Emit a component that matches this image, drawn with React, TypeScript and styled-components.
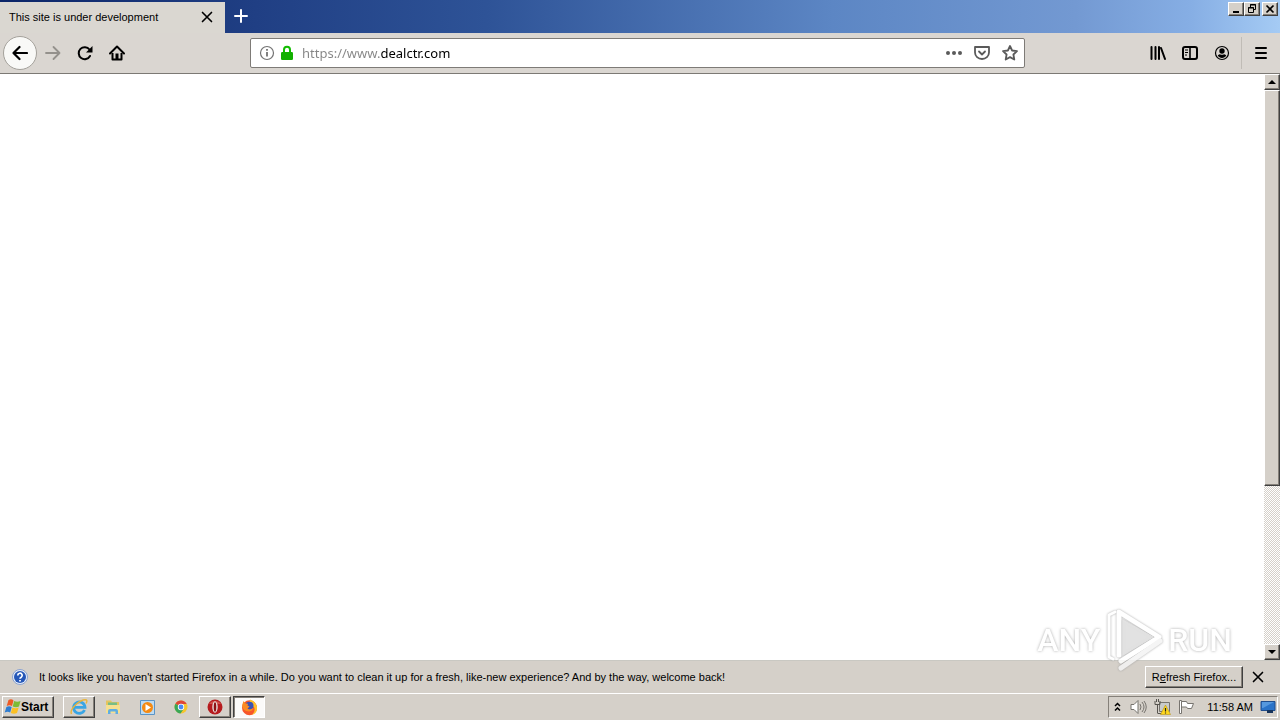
import React from "react";
import styled, { createGlobalStyle, css } from "styled-components";

const ui = `"Liberation Sans", Arial, sans-serif`;
const urlFont = `"Noto Sans", "DejaVu Sans", sans-serif`;
const face = "#d5d0c9";

const GlobalStyle = createGlobalStyle`
  * { box-sizing: border-box; }
  body { margin: 0; background: #fff; font: 11px/14px ${ui}; color: #000; }
  button { font: inherit; color: inherit; padding: 0; border: 0; background: none; }
  svg { display: block; flex: none; }
`;

const raised = css`
  background: ${face};
  border: 1px solid;
  border-color: #fff #404040 #404040 #fff;
  box-shadow: inset -1px -1px #858079;
`;

const Desktop = styled.div`
  position: relative;
  display: flex;
  flex-direction: column;
  min-height: 100vh;
`;

const TitleBar = styled.header`
  display: flex;
  height: 33px;
  background: linear-gradient(90deg, #0b2568 0%, #203f84 20%, #2e5397 38%, #5c86c4 65%, #7399d2 84%, #86aee4 93%, #a5cbf4 100%);
`;

const Tab = styled.div`
  display: flex;
  align-items: center;
  justify-content: space-between;
  width: 225px;
  margin-top: 2px;
  padding: 0 10px 2px 9px;
  background: #dad7d1;
`;

const IconButton = styled.button<{ $w?: number }>`
  display: flex;
  align-items: center;
  justify-content: center;
  width: ${(p) => p.$w ?? 32}px;
  height: 32px;
`;

const WindowControls = styled.div`
  display: flex;
  margin: 2px 2px 0 auto;
`;

const WindowButton = styled.button<{ $gap?: boolean }>`
  ${raised}
  display: flex;
  align-items: center;
  justify-content: center;
  width: 16px;
  height: 14px;
  margin-left: ${(p) => (p.$gap ? 2 : 0)}px;
`;

const Toolbar = styled.nav`
  display: flex;
  align-items: center;
  height: 41px;
  padding: 0 3px;
  background: #dad6d1;
  border-bottom: 1px solid #7c7974;
`;

const BackButton = styled(IconButton)`
  width: 34px;
  height: 34px;
  border: 1px solid #a4a19b;
  border-radius: 50%;
  background: #f9f9f7;
`;

const AddressBar = styled.div`
  display: flex;
  align-items: center;
  flex: 1;
  height: 30px;
  margin: 0 117px;
  padding-left: 8px;
  background: #fff;
  border: 1px solid #7e7b77;
  border-radius: 2px;
`;

const AddressInput = styled.input`
  flex: 1;
  min-width: 0;
  margin-left: 3px;
  padding: 0;
  border: 0;
  outline: 0;
  font: 13px/20px ${urlFont};
  color: #111;
  background: linear-gradient(90deg, #858585 78px, #000 78px) text;
  -webkit-text-fill-color: transparent;
`;

const Divider = styled.div`
  width: 1px;
  height: 32px;
  margin: 0 3px;
  background: #c0bcb6;
`;

const Viewport = styled.div`
  display: flex;
  flex: 1;
`;

const Page = styled.main`
  flex: 1;
  background: #fff;
`;

const ScrollTrack = styled.div`
  display: flex;
  flex-direction: column;
  width: 16px;
  background: repeating-conic-gradient(#d5d0c9 0 25%, #fff 0 50%) 0 0 / 2px 2px;
`;

const ScrollButton = styled.button`
  ${raised}
  display: flex;
  align-items: center;
  justify-content: center;
  height: 16px;
`;

const ScrollThumb = styled.div`
  ${raised}
  flex: 5;
`;

const ScrollRest = styled.div`
  flex: 2;
`;

const Notice = styled.section`
  display: flex;
  align-items: center;
  height: 33px;
  padding: 0 11px 0 12px;
  background: ${face};
  border-top: 1px solid #c9c8c2;
`;

const NoticeText = styled.p`
  flex: 1;
  margin: 0 0 0 11px;
  white-space: nowrap;
`;

const NoticeButton = styled.button`
  ${raised}
  width: 98px;
  height: 22px;
  margin-right: 4px;
  white-space: nowrap;
`;

const Taskbar = styled.footer`
  display: flex;
  align-items: center;
  height: 27px;
  padding: 0 2px;
  background: ${face};
  border-top: 1px solid #fff;
`;

const StartButton = styled.button`
  ${raised}
  display: flex;
  align-items: center;
  width: 52px;
  height: 22px;
  margin-right: 9px;
  padding-left: 1px;
  font-size: 12px;
  font-weight: bold;
`;

const TaskButton = styled.button<{ $state?: "open" | "active" }>`
  display: flex;
  align-items: center;
  justify-content: center;
  width: 32px;
  height: 22px;
  margin-right: 2px;
  ${(p) => p.$state === "open" && raised}
  ${(p) =>
    p.$state === "active" &&
    css`
      background: #fbfaf9;
      border: 1px solid;
      border-color: #404040 #fff #fff #404040;
      box-shadow: inset 1px 1px #858079;
    `}
`;

const Tray = styled.div`
  display: flex;
  align-items: center;
  height: 22px;
  margin-left: auto;
  padding: 0 1px 0 5px;
  gap: 7px;
  border: 1px solid;
  border-color: #858079 #fff #fff #858079;
`;

const Chevrons = styled.svg`
  margin-right: 2px;
`;

const Clock = styled.time`
  margin-left: 5px;
  white-space: nowrap;
`;

const Watermark = styled.div`
  position: absolute;
  right: 48px;
  bottom: 47px;
  display: flex;
  align-items: center;
  gap: 5px;
  height: 66px;
  font: 500 32px/40px Roboto, "Liberation Sans", sans-serif;
  color: #fff;
  text-shadow: 0 0 3px #999;
  opacity: 0.85;
  pointer-events: none;
`;

const MarkDrawing = styled.svg`
  filter: drop-shadow(0 0 1px #999);
`;

type LineProps = { d: string; size?: number; w?: number; color?: string };
const Line = ({ d, size = 16, w = 2, color = "#000" }: LineProps) => (
  <svg width={size} height={size} viewBox="0 0 16 16" fill="none" stroke={color} strokeWidth={w} strokeLinecap="round" strokeLinejoin="round" aria-hidden="true">
    <path d={d} />
  </svg>
);

const CloseGlyph = () => <Line size={12} w={2.2} d="M2 2l12 12M14 2L2 14" />;

const InfoIcon = () => (
  <svg width="16" height="16" viewBox="0 0 16 16" aria-hidden="true">
    <circle cx="8" cy="8" r="6.5" fill="none" stroke="#737373" strokeWidth="1.2" />
    <path d="M8 7v4.5M8 4v1.8" stroke="#737373" strokeWidth="1.8" />
  </svg>
);

const LockIcon = () => (
  <svg width="16" height="16" viewBox="0 0 16 16" aria-hidden="true">
    <path d="M5 8V4.8a3 3 0 0 1 6 0V8" fill="none" stroke="#12bc00" strokeWidth="2" />
    <rect x="2" y="7" width="12" height="8" rx="1.2" fill="#12b000" />
  </svg>
);

const DotsIcon = () => (
  <svg width="16" height="16" viewBox="0 0 16 16" fill="#5a5a5a" aria-hidden="true">
    <circle cx="2" cy="8" r="2" />
    <circle cx="8" cy="8" r="2" />
    <circle cx="14" cy="8" r="2" />
  </svg>
);

const LibraryIcon = () => (
  <svg width="16" height="16" viewBox="0 0 16 16" stroke="#000" strokeWidth="2" strokeLinecap="round" aria-hidden="true">
    <path d="M1.500 2v12M5.500 2v12M9 2v12M11 3l4 11" />
  </svg>
);

const SidebarIcon = () => (
  <svg width="16" height="16" viewBox="0 0 16 16" fill="none" stroke="#000" aria-hidden="true">
    <rect x="1" y="2" width="14" height="12" rx="2" strokeWidth="2" />
    <path d="M8 2v12" strokeWidth="1.600" />
    <path d="M3 5h3M3 7.500h3M3 10h2" />
  </svg>
);

const AccountIcon = () => (
  <svg width="16" height="16" viewBox="0 0 16 16" aria-hidden="true">
    <circle cx="8" cy="8" r="6.500" fill="none" stroke="#000" strokeWidth="1.200" />
    <circle cx="8" cy="6" r="2.700" />
    <path d="M3.700 10.500q1.600-1.300 2.600-1.100q1.700.8 3.400 0q1-.2 2.600 1.100A5 5 0 0 1 3.700 10.500z" />
  </svg>
);

const HomeIcon = () => (
  <svg width="16" height="16" viewBox="0 0 16 16" aria-hidden="true">
    <path d="M1 8.500L8 1.500l7 7" fill="none" stroke="#000" strokeWidth="2" strokeLinecap="round" strokeLinejoin="round" />
    <path d="M3.500 8v6.500h9V8" fill="none" stroke="#000" strokeWidth="2" strokeLinejoin="round" />
    <path d="M6.500 8.500h3V14h-3z" />
  </svg>
);

const ReloadIcon = () => (
  <svg width="16" height="16" viewBox="0 0 16 16" aria-hidden="true">
    <path d="M13 11A6 6 0 1 1 12.500 4.500" fill="none" stroke="#000" strokeWidth="2" strokeLinecap="round" />
    <path d="M15.500 1v6.500H9z" />
  </svg>
);

const HelpIcon = () => (
  <svg width="16" height="16" viewBox="0 0 16 16" aria-hidden="true">
    <circle cx="8" cy="8" r="7.500" fill="#e7edf8" stroke="#8aa2cf" strokeWidth="1" />
    <circle cx="8" cy="8" r="6" fill="#2557b8" />
    <path d="M5.800 6.500a2.200 2.200 0 1 1 3.400 1.700Q8 8.900 8 9.800M8 11v1.600" fill="none" stroke="#fff" strokeWidth="1.700" />
  </svg>
);

const WindowsFlag = () => (
  <svg width="17" height="16" viewBox="0 0 17 16" aria-hidden="true">
    <path d="M4.500 1q3-1.500 5 .5L8 7Q5.500 5.500 2.700 7z" fill="#ee5a24" />
    <path d="M10.200 2q3 1.500 6.300 0L15 7.500q-3 1.500-6.300 0z" fill="#7dbb36" />
    <path d="M2.400 8q2.600-1.500 5.300 0L6.200 13.500q-2.500-1.500-5.500 0z" fill="#2e7cd0" />
    <path d="M8.400 8.500q3 1.500 6.300 0L13 14q-3 1.500-6.200 0z" fill="#fbc024" />
  </svg>
);

const ExplorerE = () => (
  <svg width="18" height="18" viewBox="0 0 18 18" fill="none" aria-hidden="true">
    <path d="M14.500 12A5.700 5.700 0 1 1 15 9.300H5" stroke="#3aa5e4" strokeWidth="2.800" />
    <path d="M1.500 16C-1 11 11 .5 16.500 2q1 .8-.5 3.500" stroke="#e9b43a" strokeWidth="1.400" />
  </svg>
);

const FolderIcon = () => (
  <svg width="16" height="16" viewBox="0 0 16 16" aria-hidden="true">
    <path d="M1 3V1.500h5L7 3h7v11H1z" fill="#e6c55e" />
    <path d="M3 3.500h9V6H3z" fill="#77bd86" />
    <path d="M1 6h14v8H1z" fill="#f6e090" />
    <path d="M3 15v-3q0-2 2-2h6q2 0 2 2v3h-2.500v-2.500h-5V15z" fill="#5fade2" />
  </svg>
);

const MediaIcon = () => (
  <svg width="17" height="17" viewBox="0 0 17 17" aria-hidden="true">
    <path d="M1.500 1.500h14v14h-14z" fill="#bddbf2" stroke="#5a94c6" />
    <circle cx="8.500" cy="8.500" r="5.500" fill="#f58a12" />
    <path d="M6.500 5l5.500 3.500L6.500 12z" fill="#fff" />
  </svg>
);

const ChromeIcon = () => (
  <svg width="16" height="16" viewBox="0 0 16 16" aria-hidden="true">
    <circle cx="8" cy="8" r="6.500" fill="#f6c52d" />
    <path d="M8 8L2.400 4.700A6.500 6.500 0 0 1 13.700 4.900H8z" fill="#df4637" />
    <path d="M8 8L2.400 4.700A6.500 6.500 0 0 0 7.500 14.500L11 9.500z" fill="#3aa757" />
    <circle cx="8" cy="8" r="3.200" fill="#fff" />
    <circle cx="8" cy="8" r="2.400" fill="#4a8af4" />
  </svg>
);

const OperaIcon = () => (
  <svg width="16" height="16" viewBox="0 0 16 16" aria-hidden="true">
    <circle cx="8" cy="8" r="7.500" fill="#b61b1e" />
    <path d="M2 5a7 6 0 0 1 12 0z" fill="#d0504b" />
    <ellipse cx="8" cy="8" rx="2.700" ry="5.800" fill="#e9e4e0" />
    <ellipse cx="8" cy="8" rx="1.300" ry="4.800" fill="#8d1214" />
  </svg>
);

const FirefoxIcon = () => (
  <svg width="17" height="17" viewBox="0 0 17 17" aria-hidden="true">
    <circle cx="8.500" cy="8.700" r="7.500" fill="#f7562a" />
    <path d="M9 .5q6 2 7 7.500.5 6-5 8 4-4 2-8-2-2-5-2z" fill="#ffc22a" />
    <circle cx="8.500" cy="6.800" r="4" fill="#3a52b4" />
    <path d="M1.200 6l1.300-4 2 2.500 2.500.3-.5 1.700 2 1-2 2q2.500 2 5.500-.5 0 3-4 3.500Q1.500 12.500 1.200 6z" fill="#fb8b22" />
  </svg>
);

const SpeakerIcon = () => (
  <svg width="17" height="16" viewBox="0 0 17 16" fill="none" stroke="#77746f" aria-hidden="true">
    <path d="M1 5.500h3l4-4v13l-4-4H1z" fill="#fff" />
    <path d="M10 5q2 3 0 6M12 3q4 5 0 10M14 2q4.500 6 0 12" />
  </svg>
);

const NetworkIcon = () => (
  <svg width="17" height="16" viewBox="0 0 17 16" aria-hidden="true">
    <path d="M5.500 3.500h10v9h-10z" fill="#c9cbcb" stroke="#77746f" />
    <path d="M4 14.500h8" stroke="#57544f" />
    <path d="M1 2v3.500h5V2M2.500 0v3M4.500 0v3M3.500 5.500v9" fill="none" stroke="#57544f" />
    <path d="M11.500 6L16.500 15.500h-10z" fill="#ffd81e" stroke="#b89412" strokeWidth=".6" />
    <path d="M11.500 9v3.500M11.500 13.500v1" stroke="#222" strokeWidth="1.200" />
  </svg>
);

const FlagIcon = () => (
  <svg width="17" height="16" viewBox="0 0 17 16" fill="#fff" stroke="#77746f" aria-hidden="true">
    <path d="M1.500 1.500h2v13h-2z" />
    <path d="M3.500 2.500h5l1 2h6l-2 5h-4l-1-1.500h-5z" />
  </svg>
);

const MonitorIcon = () => (
  <svg width="16" height="14" viewBox="0 0 16 14" aria-hidden="true">
    <path d="M1 1.500h14v9H1z" fill="#2a73c8" stroke="#1f4d8d" />
    <path d="M2 2h12L3 8H2z" fill="#5598de" />
    <path d="M7 10h6v3H7z" fill="#17345c" />
  </svg>
);

const PlayMark = () => (
  <MarkDrawing width="58" height="66" viewBox="0 0 58 66" fill="none" strokeLinejoin="round" strokeLinecap="round" aria-hidden="true">
    <path d="M10 5L4 8v42l4 2" stroke="#fff" strokeWidth="3" />
    <path d="M14 48V5l40 25-38 24" stroke="#fff" strokeWidth="5" />
    <path d="M18 13l30 17-30 18z" fill="#ededed" fillOpacity=".7" stroke="#ddd" strokeWidth="1" />
    <path d="M16 61l39-27" stroke="#f4f4f4" strokeWidth="5" />
  </MarkDrawing>
);

export default function App() {
  return (
    <Desktop>
      <GlobalStyle />
      <TitleBar>
        <Tab>
          <span>This site is under development</span>
          <IconButton $w={16} aria-label="Close tab"><CloseGlyph /></IconButton>
        </Tab>
        <IconButton aria-label="New tab"><Line color="#fff" d="M8 2v12M2 8h12" /></IconButton>
        <WindowControls>
          <WindowButton aria-label="Minimize">
            <svg width="10" height="10" viewBox="0 0 10 10"><path d="M2 7h6v2H2z" /></svg>
          </WindowButton>
          <WindowButton aria-label="Restore">
            <svg width="10" height="10" viewBox="0 0 10 10" fill="none" stroke="#000">
              <path d="M3.500 3V.5h5v5H7M3 1h6M1.500 3.500h5v5h-5zM1 4h6" />
            </svg>
          </WindowButton>
          <WindowButton $gap aria-label="Close">
            <svg width="10" height="10" viewBox="0 0 10 10" stroke="#000" strokeWidth="1.700"><path d="M1.500 1.500l7 7M8.500 1.500l-7 7" /></svg>
          </WindowButton>
        </WindowControls>
      </TitleBar>
      <Toolbar>
        <BackButton aria-label="Back"><Line w={2.2} d="M15 8H1.500M7.500 2L1.500 8l6 6" /></BackButton>
        <IconButton aria-label="Forward"><Line color="#94918c" w={1.8} d="M1 8h13.500M8.500 2l6 6-6 6" /></IconButton>
        <IconButton aria-label="Reload"><ReloadIcon /></IconButton>
        <IconButton aria-label="Home"><HomeIcon /></IconButton>
        <AddressBar>
          <InfoIcon />
          <IconButton $w={24} aria-label="Site security"><LockIcon /></IconButton>
          <AddressInput aria-label="Address" defaultValue="https://www.dealctr.com" spellCheck={false} />
          <IconButton $w={28} aria-label="Page actions"><DotsIcon /></IconButton>
          <IconButton $w={28} aria-label="Save to Pocket"><Line color="#5a5a5a" w={1.8} d="M1 2h14v5.500a7 6.500 0 0 1-14 0zM5 6.500l3 3 3-3" /></IconButton>
          <IconButton $w={28} aria-label="Bookmark"><Line color="#5a5a5a" w={1.8} d="M8 1l2.100 4.500 4.900.6-3.600 3.400.9 5L8 12.100l-4.300 2.400.9-5L1 6.100l4.900-.6z" /></IconButton>
        </AddressBar>
        <IconButton aria-label="Library"><LibraryIcon /></IconButton>
        <IconButton aria-label="Sidebars"><SidebarIcon /></IconButton>
        <IconButton aria-label="Account"><AccountIcon /></IconButton>
        <Divider />
        <IconButton aria-label="Menu"><Line d="M3 3h10M3 8h10M3 13h10" /></IconButton>
      </Toolbar>
      <Viewport>
        <Page />
        <ScrollTrack>
          <ScrollButton aria-label="Scroll up"><svg width="8" height="4" viewBox="0 0 8 4"><path d="M0 4l4-4 4 4z" /></svg></ScrollButton>
          <ScrollThumb />
          <ScrollRest />
          <ScrollButton aria-label="Scroll down"><svg width="8" height="4" viewBox="0 0 8 4"><path d="M0 0l4 4 4-4z" /></svg></ScrollButton>
        </ScrollTrack>
      </Viewport>
      <Notice>
        <HelpIcon />
        <NoticeText>It looks like you haven't started Firefox in a while. Do you want to clean it up for a fresh, like-new experience? And by the way, welcome back!</NoticeText>
        <NoticeButton>R<u>e</u>fresh Firefox...</NoticeButton>
        <IconButton $w={22} aria-label="Dismiss"><CloseGlyph /></IconButton>
      </Notice>
      <Taskbar>
        <StartButton><WindowsFlag />Start</StartButton>
        <TaskButton $state="open" aria-label="Internet Explorer"><ExplorerE /></TaskButton>
        <TaskButton aria-label="File Explorer"><FolderIcon /></TaskButton>
        <TaskButton aria-label="Media Player"><MediaIcon /></TaskButton>
        <TaskButton aria-label="Chrome"><ChromeIcon /></TaskButton>
        <TaskButton $state="open" aria-label="Opera"><OperaIcon /></TaskButton>
        <TaskButton $state="active" aria-label="Firefox"><FirefoxIcon /></TaskButton>
        <Tray>
          <Chevrons width="7" height="10" viewBox="0 0 7 10" fill="none" stroke="#000" strokeWidth="1.500"><path d="M1 4l2.500-2.500L6 4M1 8.500L3.500 6 6 8.500" /></Chevrons>
          <SpeakerIcon />
          <NetworkIcon />
          <FlagIcon />
          <Clock>11:58 AM</Clock>
          <MonitorIcon />
        </Tray>
      </Taskbar>
      <Watermark>
        <span>ANY</span>
        <PlayMark />
        <span>RUN</span>
      </Watermark>
    </Desktop>
  );
}
